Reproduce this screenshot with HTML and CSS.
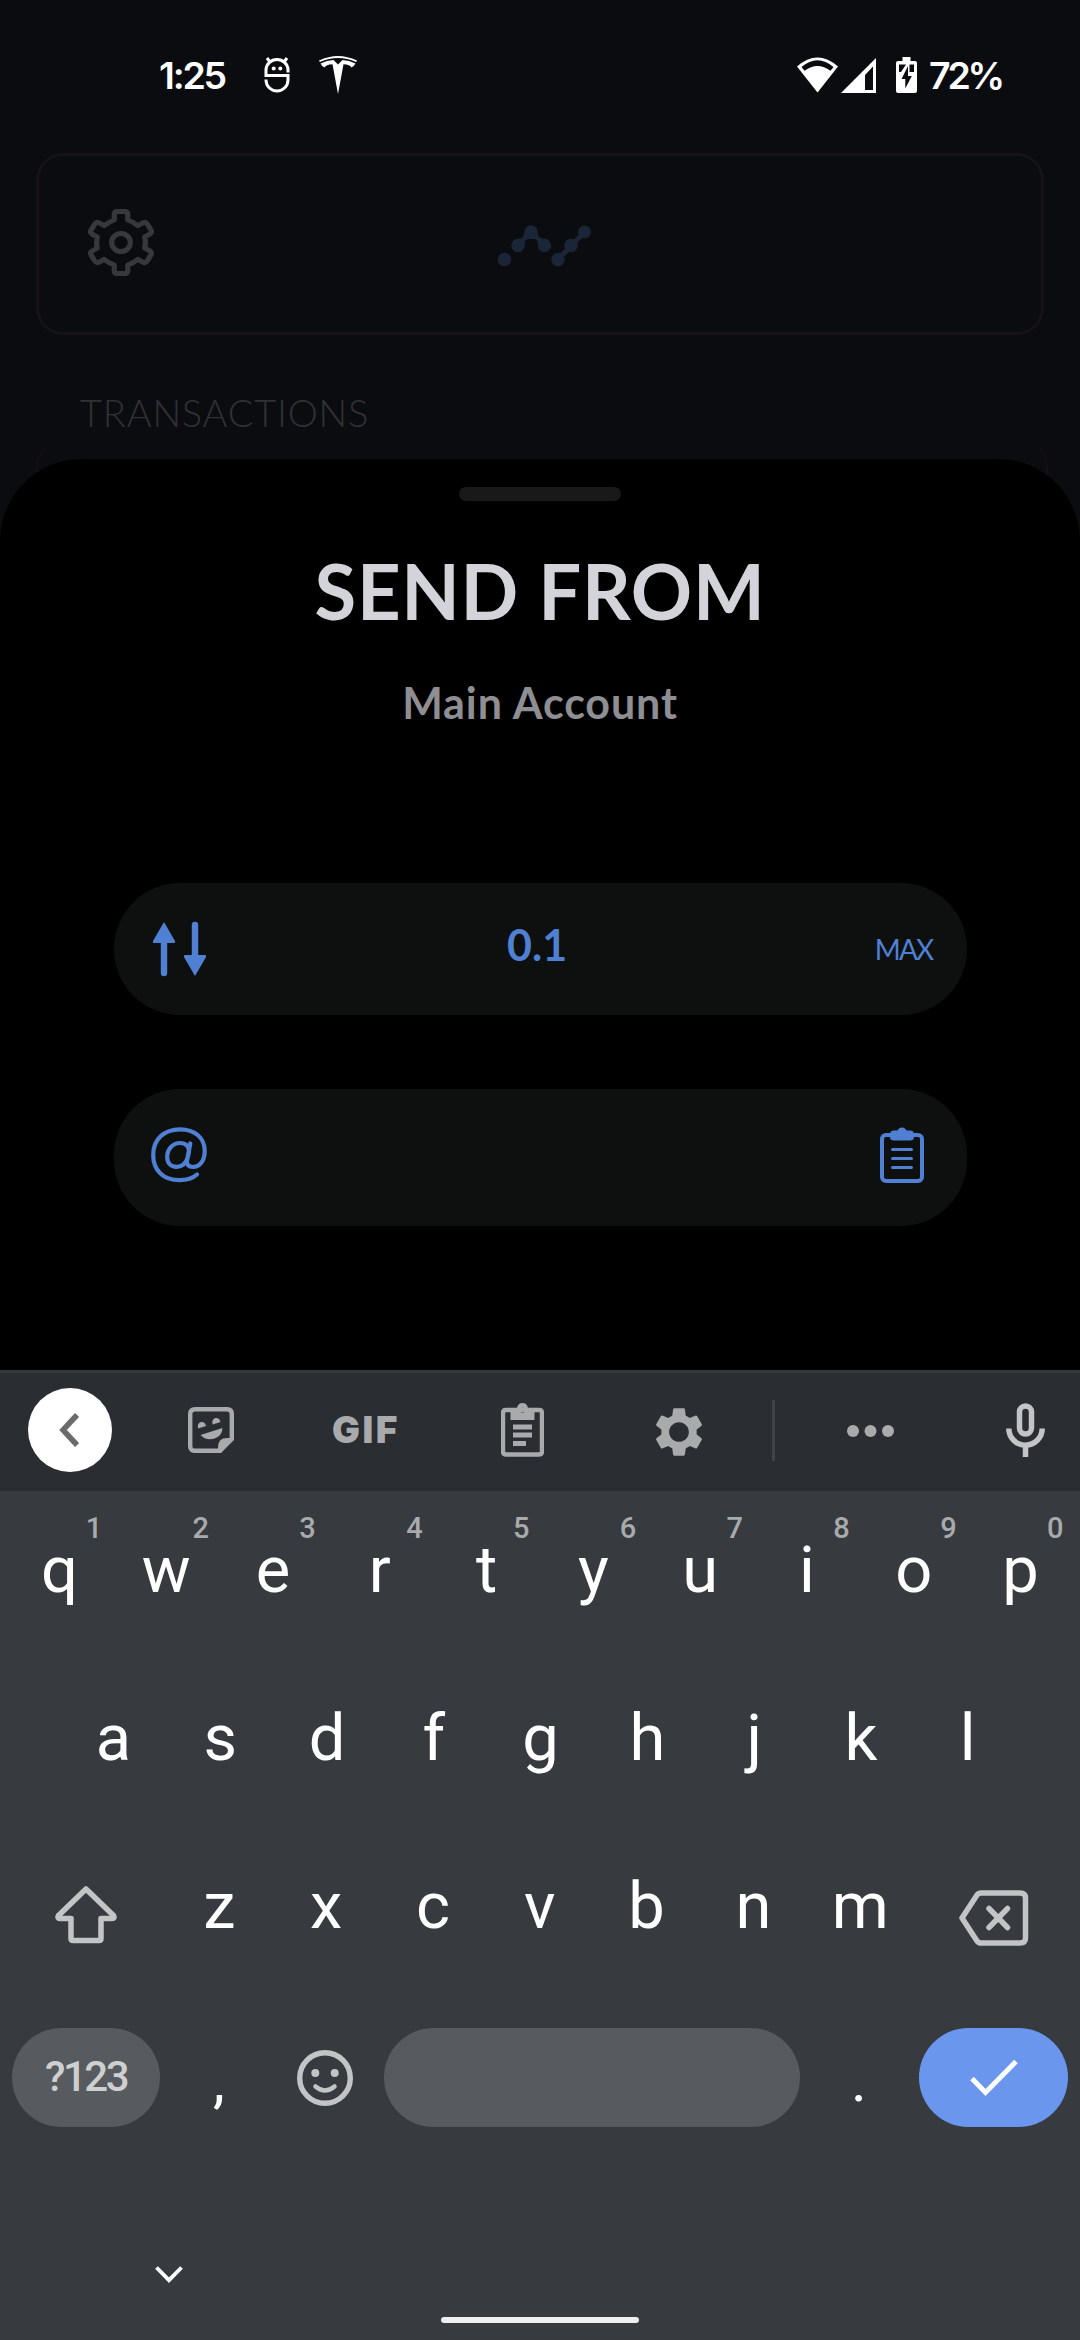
FILE: index.html
```html
<!DOCTYPE html>
<html lang="en">
<head>
<meta charset="utf-8">
<title>Send</title>
<link rel="stylesheet" href="styles.css">
</head>
<body>
<div class="screen">
  <header class="status">
    <span class="clock">1:25</span>
    <svg class="st-app" width="26" height="36" viewBox="0 0 26 36" fill="none" stroke="#fff" stroke-width="3"><path d="M24 15.500V13a11 10.500 0 0 0-22 0V18.500H24V23a11 11 0 0 1-22 0v-.500"/><path d="M3 1l3 4M23 1l-3 4" stroke-width="3"/><circle cx="9.700" cy="11.500" r="2" fill="#fff" stroke="none"/><circle cx="16.300" cy="11.500" r="2" fill="#fff" stroke="none"/></svg>
    <svg class="st-car" width="38" height="38" viewBox="0 0 38 38" fill="#fff"><path d="M0 4.500Q19-4.500 38 4.500L37.200 6Q19-1.800.8 6Z"/><path d="M1.500 7.500Q8 4.300 14.500 4L19 8.500 23.500 4Q30 4.300 36.500 7.500 35 10.500 32.500 11.500 31 8.500 24.500 8.200L19 38 13.500 8.200Q7 8.500 5.500 11.500 3 10.500 1.500 7.500Z"/></svg>
    <span class="grow"></span>
    <svg class="st-wifi" width="41" height="36" viewBox="0 0 41 36"><path d="M20.500 35.500L0 9.500Q20.500-8.500 41 9.500Z" fill="#fff"/><path d="M4.500 10Q20.500-3.500 36.500 10L33.500 13.800Q20.500 4 7.500 13.800Z" fill="#0b0c10"/></svg>
    <svg class="st-cell" width="35" height="36" viewBox="0 0 35 36"><path d="M35 1V36H0Z" fill="#fff"/><path d="M32 9.500V33H24V18Z" fill="#0b0c10"/></svg>
    <svg class="st-batt" width="21" height="36" viewBox="0 0 21 36"><path d="M6.500 0h8v4H19a2 2 0 0 1 2 2V34a2 2 0 0 1-2 2H2a2 2 0 0 1-2-2V6a2 2 0 0 1 2-2h4.500Z" fill="#fff"/><path d="M3 7.500H10L5 15H3ZM13.500 7.500H18V15H13.500ZM12 9L5.500 22H9.300V31.500L15.800 19H12Z" fill="#0b0c10"/></svg>
    <span class="pct">72%</span>
  </header>

  <section class="card">
    <svg class="gear" width="66" height="67" viewBox="-31.700 -33.500 63.400 67" preserveAspectRatio="none" fill="none" stroke="#37383b" stroke-width="5"><path stroke-linejoin="round" d="M-6.500-22.500V-28Q-6.500-31-3.500-31H3.500Q6.500-31 6.500-28V-22.500Q12-20.500 16.200-16.900L21-19.600Q23.600-21 25.200-18.500L28.700-12.400Q30.200-9.800 27.600-8.300L22.800-5.600Q24 0 22.800 5.600L27.600 8.300Q30.200 9.800 28.700 12.400L25.200 18.500Q23.600 21 21 19.600L16.200 16.900Q12 20.500 6.500 22.500V28Q6.500 31 3.500 31H-3.500Q-6.500 31-6.500 28V22.500Q-12 20.500-16.200 16.900L-21 19.600Q-23.600 21-25.200 18.500L-28.700 12.400Q-30.200 9.800-27.600 8.300L-22.800 5.600Q-24 0-22.800-5.600L-27.600-8.300Q-30.200-9.800-28.700-12.400L-25.200-18.500Q-23.600-21-21-19.600L-16.200-16.900Q-12-20.500-6.500-22.500Z"/><circle r="9"/></svg>
    <svg class="trend" width="93" height="42" viewBox="0 0 93 42" fill="#1a2638"><circle cx="6.500" cy="34.500" r="6.700"/><circle cx="20" cy="20.500" r="6.700"/><circle cx="33" cy="7" r="6.700"/><circle cx="46.500" cy="20.500" r="6.700"/><circle cx="60" cy="34.500" r="6.700"/><circle cx="73" cy="20.500" r="6.700"/><circle cx="86.500" cy="7" r="6.500"/><path d="M20 14Q26.500 13.500 26.500 7H39.500Q40 13.500 46.500 14L46 27Q40 26 40 20Q40 14 36 14H30Q26.500 14 26.500 20Z"/><path d="M60 34.500L86.500 7" stroke="#1a2638" stroke-width="5"/></svg>
  </section>
  <h2 class="label">TRANSACTIONS</h2>
  <div class="list"></div>

  <main class="sheet">
    <div class="handle"></div>
    <h1 class="title">SEND FROM</h1>
    <p class="account">Main Account</p>
    <div class="field amount">
      <svg width="53" height="56" viewBox="0 0 53 56" fill="#5080d4"><path d="M11 1L22 20Q22.500 22 21 22H1Q-.5 22 0 20Z"/><path d="M42 55L53 36Q53.500 34 52 34H32Q30.500 34 31 36Z"/><path d="M11 18V52M42 4V38" stroke="#5080d4" stroke-width="6.400" stroke-linecap="round"/></svg>
      <span class="value">0.1</span>
      <span class="max">MAX</span>
    </div>
    <div class="field address">
      <svg width="56" height="56" viewBox="0 0 56 56" fill="none" stroke="#5080d4" stroke-width="4.200" stroke-linecap="round" stroke-linejoin="round"><path d="M46 47.500C41 52 35 53.200 28.500 53.200C12 53.200 2.200 43 2.200 28C2.200 12.500 13 2.300 29 2.300C44 2.300 53.700 11 53.700 24C53.700 33.500 49 40 42 40C37.500 40 35.500 37.500 36 33.500L39.300 16.500M38 25C38 19 34.500 16 29 16C21.500 16 16.200 22.500 16.200 30C16.200 36.500 20 39.800 25.500 39.800C32 39.800 36.500 34.500 38 25"/></svg>
      <svg width="44" height="56" viewBox="0 0 44 56" fill="none" stroke="#5080d4"><rect x="2" y="8" width="40" height="46" rx="4" stroke-width="4"/><path d="M12.500 22.500H31.500M12.500 31.500H31.500M12.500 40.500H31.500" stroke-width="3" stroke-linecap="round"/><path d="M14 3.500H17.500Q19 .5 22 .5T26.500 3.500H30Q34 3.500 34 7.500V10Q34 13.500 30 13.500H14Q10 13.500 10 10V7.500Q10 3.500 14 3.500Z" fill="#5080d4" stroke="none"/></svg>
    </div>
  </main>

  <section class="keyboard">
    <div class="tools">
      <div class="back"><svg width="20" height="34" viewBox="0 0 20 34" fill="none" stroke="#6b6b6b" stroke-width="5.500"><path d="M18 2L4 17 18 32"/></svg></div>
      <svg class="t-sticker" width="46" height="46" viewBox="0 0 46 46"><path d="M7 2.200H39Q43.800 2.200 43.800 7V32L32 43.800H7Q2.200 43.800 2.200 39V7Q2.200 2.200 7 2.200Z" fill="none" stroke="#a9aaac" stroke-width="4.400"/><path d="M46 31L33 46H30V40Q30 31 39 31Z" fill="#a9aaac"/><path d="M10 21.500Q9 16 13 15 17 14.500 18 19ZM24.500 17.500Q23.500 12 27.500 11 31.500 10.500 32.500 15ZM12.500 28L34.500 21Q34 29 26.500 31.500 18 34 12.500 28Z" fill="#a9aaac"/></svg>
      <span class="gif">GIF</span>
      <svg class="t-clip" width="43" height="54" viewBox="0 0 43 54"><path d="M5 7H38Q41 7 41 10V48.500Q41 51.500 38 51.500H5Q2 51.500 2 48.500V10Q2 7 5 7Z" fill="none" stroke="#a9aaac" stroke-width="4.400"/><path fill-rule="evenodd" d="M9.500 5H16Q17 0 21.500 0T27 5H33.500V17H9.500ZM21.500 4.700A2.500 2.500 0 1 0 21.500 9.700 2.500 2.500 0 1 0 21.500 4.700Z" fill="#a9aaac"/><path d="M12 24H31M12 32H31M12 40.500H25" stroke="#a9aaac" stroke-width="5"/></svg>
      <svg class="t-gear" width="48" height="50" viewBox="2.250 2 19.500 20"><path fill="#a9aaac" d="M19.140 12.940c.04-.3.060-.61.060-.94 0-.32-.02-.64-.07-.94l2.030-1.580c.18-.14.230-.41.120-.61l-1.920-3.320c-.12-.22-.37-.29-.59-.22l-2.390.96c-.5-.38-1.030-.7-1.620-.94l-.36-2.540c-.04-.24-.24-.41-.48-.41h-3.840c-.24 0-.43.17-.47.41l-.36 2.540c-.59.24-1.130.57-1.620.94l-2.390-.96c-.22-.08-.47 0-.59.22L2.740 8.870c-.12.210-.08.470.12.610l2.030 1.580c-.05.3-.09.630-.09.940s.02.640.07.940l-2.030 1.580c-.18.140-.23.410-.12.610l1.920 3.320c.12.220.37.290.59.220l2.390-.96c.5.380 1.030.7 1.620.94l.36 2.540c.05.240.24.410.48.410h3.840c.24 0 .44-.17.470-.41l.36-2.540c.59-.24 1.130-.56 1.620-.94l2.390.96c.22.080.47 0 .59-.22l1.920-3.320c.12-.22.070-.47-.12-.61l-2.010-1.580zM12 16c-2.200 0-4-1.800-4-4s1.800-4 4-4 4 1.800 4 4-1.800 4-4 4z"/></svg>
      <span class="rule"></span>
      <svg class="t-dots" width="47" height="12" viewBox="0 0 47 12" fill="#a9aaac"><circle cx="6" cy="6" r="6"/><circle cx="23.500" cy="6" r="6"/><circle cx="41" cy="6" r="6"/></svg>
      <svg class="t-mic" width="39" height="54" viewBox="0 0 39 54" fill="none" stroke="#c3c4c6" stroke-width="5.500"><rect x="13.500" y="3" width="12" height="28" rx="6"/><path d="M2.800 25.500A16.700 16.700 0 0 0 36.200 25.500M19.500 43V54"/></svg>
    </div>
    <div class="row row1">
      <div class="key">q<sup>1</sup></div><div class="key">w<sup>2</sup></div><div class="key">e<sup>3</sup></div><div class="key">r<sup>4</sup></div><div class="key">t<sup>5</sup></div><div class="key">y<sup>6</sup></div><div class="key">u<sup>7</sup></div><div class="key">i<sup>8</sup></div><div class="key">o<sup>9</sup></div><div class="key">p<sup>0</sup></div>
    </div>
    <div class="row row2">
      <div class="key">a</div><div class="key">s</div><div class="key">d</div><div class="key">f</div><div class="key">g</div><div class="key">h</div><div class="key">j</div><div class="key">k</div><div class="key">l</div>
    </div>
    <div class="row row3">
      <div class="wide"><svg width="62" height="60" viewBox="0 0 62 60" fill="none" stroke="#c3c4c6" stroke-width="5.500"><path stroke-linejoin="round" d="M31 5L58.500 31.500Q60 34.500 57 34.500H46V54.500Q46 56.500 44 56.500H18Q16 56.500 16 54.500V34.500H5Q2 34.500 3.500 31.500Z"/></svg></div>
      <div class="key">z</div><div class="key">x</div><div class="key">c</div><div class="key">v</div><div class="key">b</div><div class="key">n</div><div class="key">m</div>
      <div class="wide"><svg width="70" height="56" viewBox="0 0 70 56" fill="none" stroke="#c3c4c6" stroke-width="5.500"><path stroke-linejoin="round" d="M22 3H61Q66.500 3 66.500 8V48Q66.500 53 61 53H22Q19.500 53 18 51L3 28 18 5Q19.500 3 22 3Z"/><path stroke-linecap="round" d="M30 18.500L48.500 37.500M48.500 18.500L30 37.500"/></svg></div>
    </div>
    <div class="row row4">
      <div class="sym">?123</div>
      <div class="punct">,</div>
      <svg class="smile" width="56" height="56" viewBox="0 0 56 56" fill="none" stroke="#c3c4c6"><circle cx="28" cy="28" r="25.300" stroke-width="5.400"/><path d="M18.500 36.500Q28 44.500 37.500 36.500" stroke-width="4.500" stroke-linecap="round"/><circle cx="18.300" cy="23" r="4" fill="#c3c4c6" stroke="none"/><circle cx="37.700" cy="23" r="4" fill="#c3c4c6" stroke="none"/></svg>
      <div class="space"></div>
      <div class="punct">.</div>
      <div class="enter"><svg width="48" height="38" viewBox="0 0 48 38" fill="none" stroke="#fff" stroke-width="5"><path d="M2 19.500L15.500 33.500 46 2.500"/></svg></div>
    </div>
    <div class="nav">
      <svg width="28" height="18" viewBox="0 0 28 18" fill="none" stroke="#fff" stroke-width="3.800"><path d="M1.500 1.500L14 14.200 26.500 1.500"/></svg>
      <div class="home"></div>
    </div>
  </section>
</div>
</body>
</html>
```
FILE: styles.css
```css
* { box-sizing: border-box; }
body { margin: 0; background: #0b0c10; font-family: Roboto, "Noto Sans", sans-serif; }
h1, h2, p { margin: 0; font-weight: normal; }
svg { display: block; flex: none; }
.screen { width: 1080px; height: 2340px; overflow: hidden; display: flex; flex-direction: column; }

.status { height: 153px; flex: none; display: flex; align-items: flex-start; padding: 57px 77px 0 159px; color: #fff; }
.clock, .pct { font: 600 37.500px/38px Inter, sans-serif; white-space: nowrap; }
.clock { width: 105px; letter-spacing: -2.200px; }
.pct { width: 74px; letter-spacing: -3.200px; }
.st-car { margin: -1px 0 0 29px; }
.grow { flex: 1; }
.st-cell { margin-left: 3px; }
.st-batt { margin: 0 12px 0 20px; }

.card { flex: none; width: 1008px; height: 182px; margin-left: 36px; border: 3px solid #171215; border-radius: 27px; display: flex; align-items: center; padding-left: 49px; }
.gear { margin-bottom: 3px; }
.trend { margin: 4px 0 0 344px; }
.label { flex: none; height: 105px; padding: 58px 0 0 80px; font: 300 38px/38px Lato, sans-serif; color: #303134; letter-spacing: 0.800px; white-space: nowrap; }
.list { flex: none; height: 19px; }
.list::before { content: ""; display: block; width: 1008px; height: 60px; margin-left: 36px; border: 2px solid #130f12; border-top-color: transparent; border-bottom: 0; border-radius: 27px 27px 0 0; }

.sheet { flex: none; position: relative; height: 911px; background: #000; border-radius: 82px 82px 0 0; display: flex; flex-direction: column; align-items: center; padding-top: 28px; }
.handle { width: 162px; height: 14px; border-radius: 7px; background: #191919; }
.title { margin-top: 43px; font: 700 76px/94px Lato, sans-serif; letter-spacing: 0.700px; color: #d3d3da; white-space: nowrap; }
.account { margin-top: 38px; font: 700 43px/54px Lato, sans-serif; letter-spacing: 0.900px; color: #8e8e93; white-space: nowrap; }
.field { width: 853px; border-radius: 66px; background: #0e100f; display: flex; align-items: center; justify-content: space-between; color: #5080d4; }
.amount { height: 132px; margin-top: 153px; padding: 0 34px 0 39px; }
.value { font: 700 43px/50px Lato, sans-serif; margin: -8px 0 0 -6px; }
.max { font: 400 28px/36px Lato, sans-serif; letter-spacing: -1.800px; }
.address { height: 137px; margin-top: 74px; padding: 0 43px 5px 37px; }

.keyboard { flex: 1; background: #373a3f; border-top: 3px solid #35373b; display: flex; flex-direction: column; color: #fff; }
.tools { flex: none; height: 118px; background: #2a2d32; display: flex; align-items: center; padding-left: 28px; }
.back { width: 84px; height: 84px; border-radius: 42px; background: #fff; display: flex; align-items: center; justify-content: center; margin-top: -4px; }
.back svg { margin-right: 3px; }
.t-sticker { margin: -4px 0 0 76px; }
.gif { margin: -4px 0 0 98px; width: 65px; font: 900 37px/40px Inter, sans-serif; color: #a9aaac; letter-spacing: 2.500px; }
.t-clip { margin: -4px 0 0 104px; }
.t-gear { margin-left: 111px; }
.rule { width: 3px; height: 61px; margin: -4px 0 0 69px; background: #404246; }
.t-dots { margin: -3px 0 0 72px; }
.t-mic { margin: -4px 0 0 112px; }

.row { flex: none; display: flex; }
.key { position: relative; width: 106.8px; height: 168px; text-align: center; font-size: 65px; line-height: 76px; }
.key sup { position: absolute; left: 68px; top: -20px; width: 40px; font: 500 29px/32px Roboto, sans-serif; color: #a9aaac; text-align: center; vertical-align: baseline; }
.row1 { padding: 41px 0 0 6px; height: 209px; }
.row2 { padding-left: 60px; }
.row3 { height: 169px; }
.wide { width: 166px; padding: 16px 0 0 55px; }
.row3 .wide:last-child { padding: 22px 0 0 45px; }
.row4 { height: 99px; margin-top: -9px; align-items: center; padding-left: 12px; }
.sym { width: 148px; height: 99px; border-radius: 50px; background: #575a5f; color: #cdcfd0; font: 500 42px/98px Roboto, sans-serif; text-align: center; letter-spacing: -2.500px; }
.punct { width: 118px; padding-top: 7px; text-align: center; font-size: 60px; line-height: 76px; }
.smile { margin-left: 19px; }
.space { width: 416px; height: 99px; margin-left: 31px; border-radius: 50px; background: #575a5f; }
.enter { width: 149px; height: 99px; border-radius: 50px; background: #6a96ee; display: flex; align-items: center; justify-content: center; margin-left: 1px; }
.nav { flex: 1; padding: 139px 0 0 155px; }
.home { width: 198px; height: 6px; border-radius: 3px; background: #eee; margin: 33px 0 0 286px; }
```
